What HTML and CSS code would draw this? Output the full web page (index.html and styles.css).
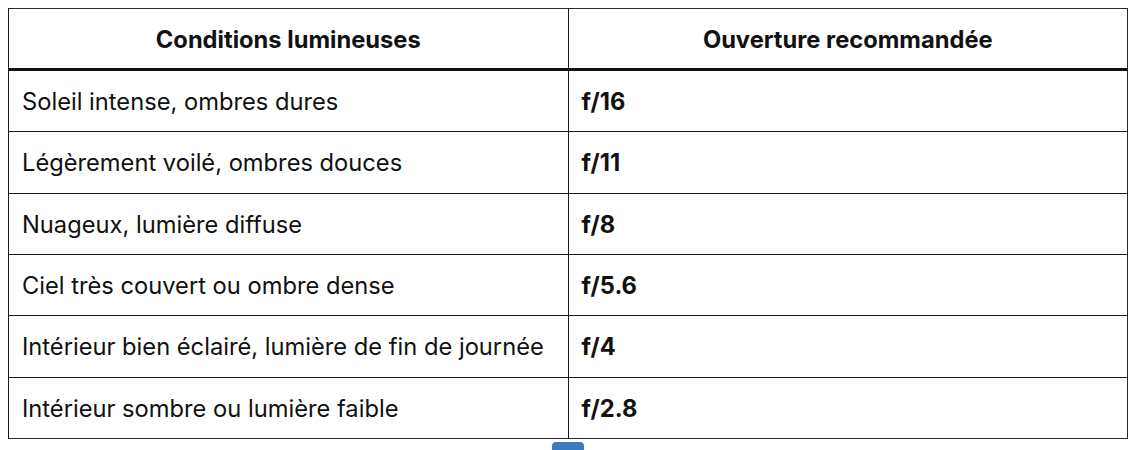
FILE: index.html
```html
<!DOCTYPE html>
<html lang="fr">
<head>
<meta charset="utf-8">
<title>Ouvertures</title>
<link rel="stylesheet" href="styles.css">
</head>
<body>
<div class="wrap">
  <table class="tbl">
    <thead>
      <tr><th>Conditions lumineuses</th><th>Ouverture recommandée</th></tr>
    </thead>
    <tbody>
      <tr><td>Soleil intense, ombres dures</td><td class="val">f/16</td></tr>
      <tr><td>Légèrement voilé, ombres douces</td><td class="val">f/11</td></tr>
      <tr><td>Nuageux, lumière diffuse</td><td class="val">f/8</td></tr>
      <tr><td>Ciel très couvert ou ombre dense</td><td class="val">f/5.6</td></tr>
      <tr><td>Intérieur bien éclairé, lumière de fin de journée</td><td class="val">f/4</td></tr>
      <tr><td>Intérieur sombre ou lumière faible</td><td class="val">f/2.8</td></tr>
    </tbody>
  </table>
  <div class="below"><span class="tab"></span></div>
</div>
</body>
</html>
```

FILE: styles.css
```css
html, body {
  margin: 0;
  padding: 0;
  background: #ffffff;
}
body {
  padding: 8px 0 0 8px;
  font-family: Inter, "Liberation Sans", Arial, sans-serif;
  color: #111111;
  overflow: hidden;
}
.wrap {
  width: 1120px;
}
.tbl {
  width: 100%;
  border-collapse: collapse;
  table-layout: fixed;
  border: 1px solid #2a2a2a;
  font-size: 23.7px;
}
.tbl th {
  font-weight: 700;
  text-align: center;
  line-height: 28px;
  padding: 16.5px 13px 14.5px;
  border-left: 1px solid #1a1a1a;
  border-bottom: 3px solid #111111;
}
.tbl td {
  text-align: left;
  line-height: 28px;
  padding: 17.17px 13px 15.17px;
  border-left: 1px solid #1a1a1a;
  border-top: 1px solid #1a1a1a;
}
.tbl td.val {
  font-weight: 700;
}
.below {
  display: flex;
  justify-content: center;
  margin-top: 3px;
}
.tab {
  display: block;
  width: 32px;
  height: 10px;
  background: #3a7cc2;
  border-radius: 4px 4px 0 0;
}
```
